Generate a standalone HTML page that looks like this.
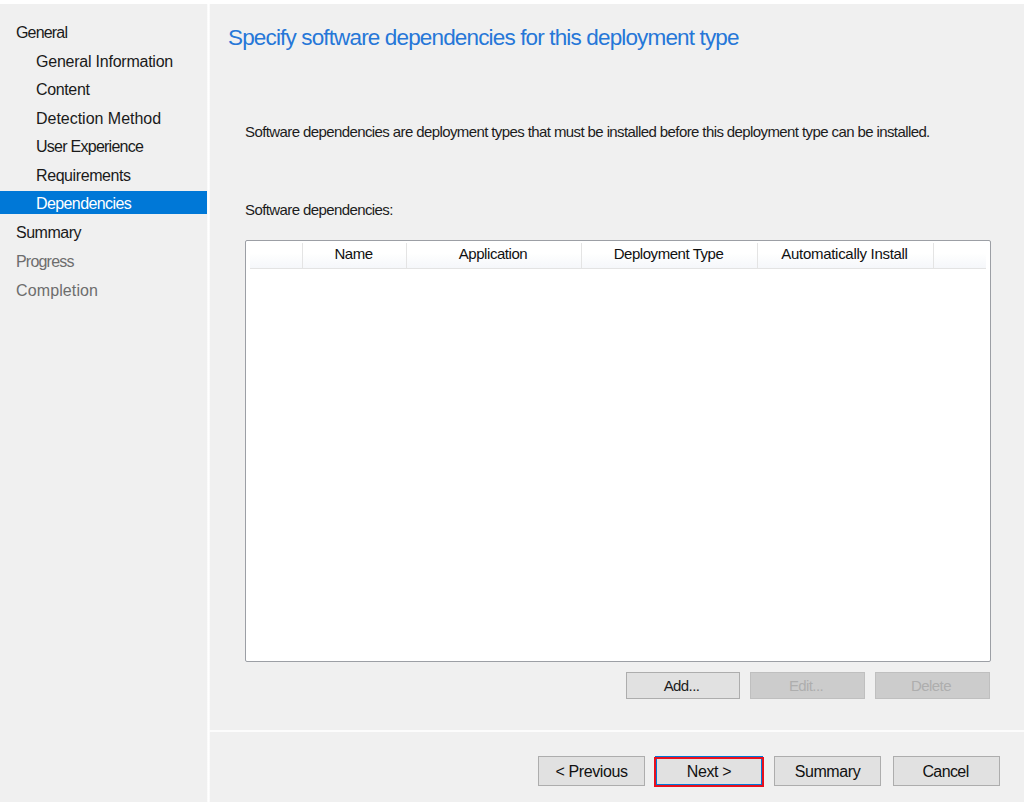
<!DOCTYPE html>
<html>
<head>
<meta charset="utf-8">
<style>
html,body{margin:0;padding:0;}
body{width:1024px;height:802px;position:relative;overflow:hidden;background:#f0f0f0;font-family:"Liberation Sans",sans-serif;color:#000;}
.a{position:absolute;white-space:nowrap;line-height:18px;}
#topstrip{position:absolute;left:0;top:0;width:1024px;height:4px;background:#fff;}
#vline{position:absolute;left:207px;top:4px;width:3px;height:798px;background:linear-gradient(to right,#f8f8f8,#fff 50%,#f8f8f8);}
#hline{position:absolute;left:209px;top:730px;width:815px;height:2px;background:#fcfcfc;}
#hl{position:absolute;left:0;top:191px;width:207px;height:23px;background:#0078d7;}
.nav{font-size:16px;letter-spacing:-0.3px;color:#1a1a1a;}
.dis{color:#6d6d6d;}
#title{left:228px;top:26px;font-size:22.5px;letter-spacing:-0.85px;color:#2677d8;line-height:24px;}
.ms{font-size:15px;letter-spacing:-0.6px;color:#1c1c1c;}
#table{position:absolute;left:245px;top:240px;width:746px;height:422px;border:1.5px solid #9c9fa5;border-radius:2px;background:#fff;box-sizing:border-box;}
#hdr{position:absolute;left:4px;top:2px;width:736px;height:26px;background:linear-gradient(#ffffff,#ffffff 40%,#f5f7fa);border-bottom:1px solid #e3e3e3;box-sizing:border-box;}
.sep{position:absolute;top:0;width:1px;height:25px;background:#e4e4e4;}
.hd{position:absolute;top:2px;font-size:15px;letter-spacing:-0.45px;color:#111;white-space:nowrap;line-height:18px;text-align:center;}
.btn{position:absolute;box-sizing:border-box;border:1px solid #adadad;background:#e1e1e1;text-align:center;white-space:nowrap;}
.btn.dis2{background:#cccccc;border-color:#bfbfbf;color:#a3a3a3;}
.bb{font-size:16px;letter-spacing:-0.4px;color:#111;}
</style>
</head>
<body>
<div id="topstrip"></div>
<div id="hl"></div>
<div id="vline"></div>
<div id="hline"></div>

<div class="a nav" style="left:16px;top:24px;letter-spacing:-0.83px;">General</div>
<div class="a nav" style="left:36px;top:53px;letter-spacing:-0.23px;">General Information</div>
<div class="a nav" style="left:36px;top:81px;letter-spacing:-0.36px;">Content</div>
<div class="a nav" style="left:36px;top:110px;letter-spacing:-0.02px;">Detection Method</div>
<div class="a nav" style="left:36px;top:138px;letter-spacing:-0.74px;">User Experience</div>
<div class="a nav" style="left:36px;top:167px;letter-spacing:-0.41px;">Requirements</div>
<div class="a nav" style="left:36px;top:195px;color:#fff;letter-spacing:-0.6px;">Dependencies</div>
<div class="a nav" style="left:16px;top:224px;letter-spacing:-0.5px;">Summary</div>
<div class="a nav dis" style="left:16px;top:253px;letter-spacing:-0.8px;">Progress</div>
<div class="a nav dis" style="left:16px;top:282px;letter-spacing:0.12px;">Completion</div>

<div class="a" id="title">Specify software dependencies for this deployment type</div>

<div class="a ms" style="left:245px;top:123px;">Software dependencies are deployment types that must be installed before this deployment type can be installed.</div>
<div class="a ms" style="left:245px;top:201px;">Software dependencies:</div>

<div id="table">
  <div id="hdr">
    <div class="sep" style="left:52px;"></div>
    <div class="sep" style="left:156px;"></div>
    <div class="sep" style="left:331px;"></div>
    <div class="sep" style="left:507px;"></div>
    <div class="sep" style="left:683px;"></div>
    <div class="hd" style="left:52px;width:103px;">Name</div>
    <div class="hd" style="left:156px;width:174px;">Application</div>
    <div class="hd" style="left:331px;width:175px;">Deployment Type</div>
    <div class="hd" style="left:507px;width:175px;letter-spacing:-0.3px;">Automatically Install</div>
  </div>
</div>

<div class="btn ms" style="left:626px;top:672px;width:114px;height:27px;line-height:25px;text-indent:-3px;">Add...</div>
<div class="btn ms dis2" style="left:750px;top:672px;width:115px;height:27px;line-height:25px;color:#aeaeae;text-indent:-3px;">Edit...</div>
<div class="btn ms dis2" style="left:875px;top:672px;width:115px;height:27px;line-height:25px;color:#aeaeae;text-indent:-3px;">Delete</div>

<div class="btn bb" style="left:538px;top:756px;width:107px;height:30px;line-height:30px;">&lt; Previous</div>
<div class="btn bb" style="left:655px;top:756px;width:108px;height:30px;line-height:28px;border:2px solid #0078d7;">Next &gt;</div>
<div style="position:absolute;left:654px;top:757px;width:110px;height:30px;box-sizing:border-box;border:2px solid #e8101e;"></div>
<div class="btn bb" style="left:774px;top:756px;width:107px;height:30px;line-height:30px;">Summary</div>
<div class="btn bb" style="left:893px;top:756px;width:107px;height:30px;line-height:30px;letter-spacing:-0.6px;text-indent:-2px;">Cancel</div>
</body>
</html>
